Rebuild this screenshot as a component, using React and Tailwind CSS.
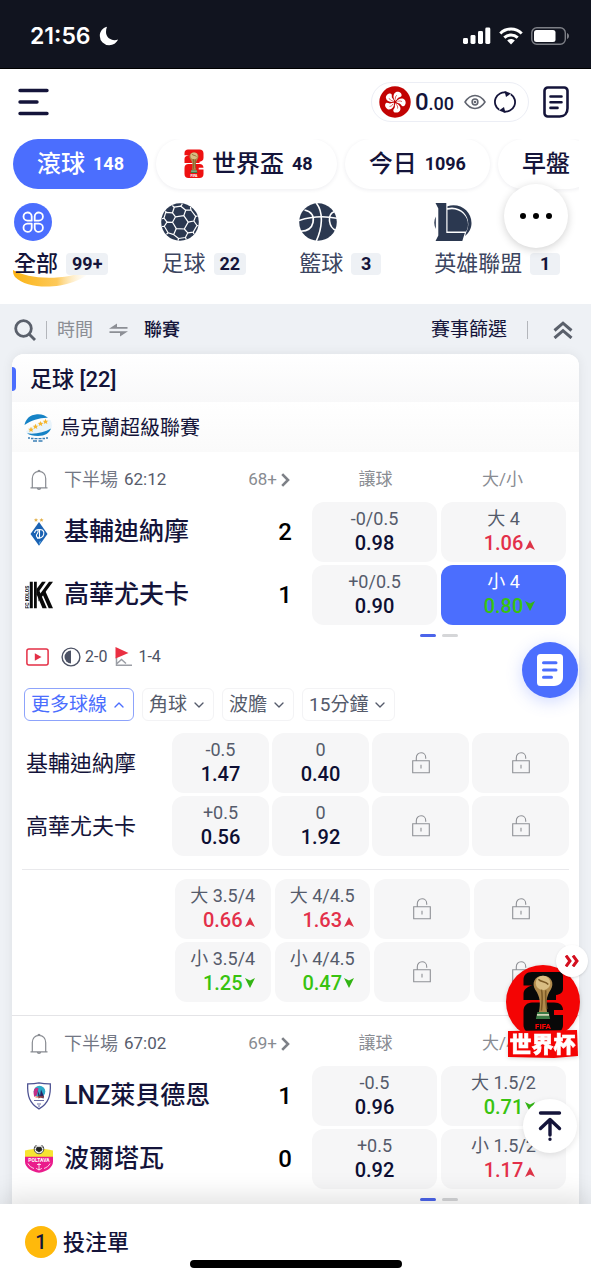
import React, { useState } from 'react';
import clsx from 'clsx';
import { ChevronDown, ChevronUp } from 'lucide-react';

const tabs = [
  { id: 'live', label: '滾球', count: 148 },
  { id: 'worldcup', label: '世界盃', count: 48, cup: true },
  { id: 'today', label: '今日', count: 1096 },
  { id: 'early', label: '早盤' },
];

const lines = ['更多球線', '角球', '波膽', '15分鐘'];

/* ---------- status bar icons ---------- */

const Moon = () => (
  <svg viewBox="0 0 20 20" className="w-5 h-5" fill="#fff">
    <path d="M8 .8C3.600 2 .8 5.500 .8 10a9.400 9.400 0 0 0 9.400 9.300c4 0 7.400-2.300 8.800-5.700-5.900 2-12-1.600-12-7.600C7 4.200 7.300 2.500 8 .8z" />
  </svg>
);

const Signal = () => (
  <svg viewBox="0 0 28 18" className="w-7 h-[18px]" fill="#fff">
    <rect x="0" y="11" width="5" height="6" rx="1.400" />
    <rect x="7.500" y="8" width="5" height="9" rx="1.400" />
    <rect x="15" y="4" width="5" height="13" rx="1.400" />
    <rect x="22.300" y="0.500" width="5" height="16.500" rx="1.400" />
  </svg>
);

const Wifi = () => (
  <svg viewBox="0 0 24 18" className="w-6 h-[18px]" fill="none" stroke="#fff" strokeWidth="3">
    <path d="M1.300 6.500C7.300.6 16.700.6 22.700 6.500" />
    <path d="M5.300 10.700c3.900-3.700 9.500-3.700 13.400 0" />
    <path d="M8.200 13.500c2.200-2 5.400-2 7.600 0L12 17.600z" fill="#fff" stroke="none" />
  </svg>
);

const Battery = () => (
  <svg viewBox="0 0 38 18" className="w-[38px] h-[18px]">
    <rect x="0.800" y="0.800" width="33.500" height="16.400" rx="5" fill="none" stroke="#7d7f86" strokeWidth="1.400" />
    <rect x="3" y="3" width="21.500" height="12" rx="2.500" fill="#fff" />
    <path d="M36 6v6c1.300-.5 2-1.700 2-3s-.7-2.500-2-3z" fill="#7d7f86" />
  </svg>
);

/* ---------- header icons ---------- */

const MenuIcon = () => (
  <svg viewBox="0 0 31 28" className="w-[31px] h-7" stroke="#14143a" strokeWidth="3.400" strokeLinecap="round">
    <path d="M2 2.500h27M2 14h17M2 25.500h27" />
  </svg>
);

const HongKong = () => (
  <svg viewBox="-16 -16 32 32" className="w-8 h-8">
    <circle r="15.700" fill="#c20303" />
    {[18, 90, 162, 234, 306].map((a) => (
      <g key={a} transform={`rotate(${a})`}>
        <path d="M0-1.200C-3.500-3-4.500-7.500-2-9.800 0-11.400 3.800-10.800 4.300-8.200 4.600-6.400 2.200-6.200 1.600-4.600 1.200-3.200 1-2.200 0-1.200z" fill="#fff" />
        <path d="M-.4-2.500C-1.300-4.200-1.200-5.500-.4-7" fill="none" stroke="#c20303" strokeWidth=".6" />
      </g>
    ))}
  </svg>
);

const Eye = () => (
  <svg viewBox="0 0 22 16" className="w-[22px] h-4" fill="none" stroke="#60646f" strokeWidth="1.500">
    <path d="M1 8C3.700 3.900 7.200 1.600 11 1.600S18.300 3.900 21 8c-2.700 4.100-6.200 6.400-10 6.400S3.700 12.100 1 8z" />
    <circle cx="11" cy="8" r="2.900" />
    <circle cx="11" cy="8" r=".6" />
  </svg>
);

const Refresh = () => (
  <svg viewBox="0 0 22 22" className="w-[22px] h-[22px]" fill="none" stroke="#14143a" strokeWidth="1.800">
    <path d="M5.200 18.800A9.500 9.500 0 0 1 12.500 1.600" />
    <path d="M16.800 3.200A9.500 9.500 0 0 1 9.500 20.400" />
    <path d="M10.500 0l6.500 2.500-5 3.500z" fill="#14143a" stroke="none" />
    <path d="M11.500 22L5 19.500 10 16z" fill="#14143a" stroke="none" />
  </svg>
);

const SlipOutline = () => (
  <svg viewBox="0 0 26 32" className="w-[26px] h-8" fill="none" stroke="#14143a" strokeWidth="2.600" strokeLinecap="round">
    <path d="M4.800 1.500h16.400a3.300 3.300 0 0 1 3.300 3.300v17.400c0 5-3 8.300-7.800 8.300H4.800a3.300 3.300 0 0 1-3.300-3.300V4.800a3.300 3.300 0 0 1 3.300-3.300z" />
    <path d="M7.500 10.500h11M7.500 16.200h11M7.500 21.900h7" />
  </svg>
);

const SlipSolid = () => (
  <svg viewBox="0 0 26 32" className="w-[26px] h-8">
    <path d="M3.500 0h19A3.500 3.500 0 0 1 26 3.500V23c0 5.500-3.500 9-9 9H3.500A3.500 3.500 0 0 1 0 28.500v-25A3.500 3.500 0 0 1 3.500 0z" fill="#fff" />
    <path d="M6.500 8.800h12.500M6.500 16h12.500M6.500 23.200h8" stroke="#4b6efe" strokeWidth="3" strokeLinecap="round" />
  </svg>
);

const Trophy = () => (
  <g>
    <path d="M-3.600 22h7.200l1 4.500h-9.200z" fill="#3b7a45" />
    <path d="M-3.900 23.800h7.800" stroke="#e8e2c8" strokeWidth="1" />
    <path d="M-2.600 22C-1.500 16-1.800 12-5 7.500-7.500 3.500-5.500-1.500 0-1.500S7.500 3.500 5 7.500C1.800 12 2 16 2.600 22z" fill="#b08a4c" />
    <circle cx="0" cy="3.200" r="4.700" fill="#d9bd83" />
    <path d="M-3 .8C-1 3 1.500 2 3.400 4.200M-1 7.500C0 12-.6 17-1 21M1.800 8c-.4 4 .2 8 .6 12" fill="none" stroke="#7c5a26" strokeWidth="1" />
  </g>
);

const CupLogo = () => (
  <svg viewBox="0 0 20 30" className="w-5 h-[30px] ml-1">
    <path d="M4 .5h11.500C18 .5 19.500 2 19.500 4.500v4.200c0 2.500-1.500 3.700-4 4v1.300H.5v-4c0-2.500 1.500-3.300 4.500-3.800H.5V4C.5 1.700 2 .5 4 .5z" fill="#ee1111" />
    <path d="M4.500 15h11c2.500 0 4 1.500 4 3.700h-4.800v1.800h4.800V25c0 2.500-1.500 4-4 4h-11c-2.500 0-4-1.500-4-4v-6c0-2.500 1.500-4 4-4z" fill="#ee1111" />
    <g transform="translate(10 4.500) scale(.74)"><Trophy /></g>
    <text x="10" y="28.300" textAnchor="middle" fontSize="3.500" fontWeight="900" fill="#fff" fontFamily="Roboto">FIFA</text>
  </svg>
);

/* ---------- sport icons ---------- */

const AllIcon = () => (
  <svg viewBox="0 0 38 38" className="w-[38px] h-[38px]">
    <circle cx="19" cy="19" r="19" fill="#4b6efe" />
    <g fill="none" stroke="#fff" strokeWidth="1.800" strokeLinejoin="round">
      <path d="M17.700 17.700h-4.200a4.100 4.100 0 1 1 4.200-4.200z" />
      <path d="M20.700 17.700h4.200a4.100 4.100 0 1 0-4.200-4.200z" />
      <path d="M17.700 20.700h-4.200a4.100 4.100 0 1 0 4.200 4.200z" />
      <path d="M20.700 20.700h4.200a4.100 4.100 0 1 1-4.200 4.200z" />
    </g>
  </svg>
);

const SoccerIcon = () => (
  <svg viewBox="0 0 38 38" className="w-[38px] h-[38px]">
    <circle cx="19" cy="19" r="18.800" fill="#2b3850" />
    <g fill="none" stroke="#fff" strokeWidth="1.200" strokeLinejoin="round">
      <path d="M14.500 13.800l8.300-1.200 4.400 6.500-3.900 6.900-8-.4-3.800-6.300z" />
      <path d="M14.500 13.800l-3-4 1.800-5.600 6.600-1 4.800 4-1.900 5.400" />
      <path d="M24.700 7.200l5.200-.2 4.800 6.300-1.900 4.700-5.600 1.100" />
      <path d="M32.800 18l3.200 4.500-3.800 6.600-5.400.7-3.500-3.800" />
      <path d="M26.800 29.800l-2.400 4.700-6.800 1-4.900-3.900 2.600-6" />
      <path d="M12.700 31.600l-5.600-1.800-3.800-6.500 2.700-4.200 5.500.2" />
      <path d="M6 19.100l-3-4 1.700-5.800 6.800.5" />
      <path d="M13.300 4.200l-2-1.700M19.900 3.200l1.500-2.400M29.900 7l-.4-3M34.700 13.300l2-.3M36 22.500l1.500.4M32.200 29.100l.8 1.800M24.400 34.500l1 2M17.600 35.500l-.6 2M7.100 29.800l-1.600 1.500M3.300 23.300l-2.400.2M3 15.100l-2 .6M4.700 9.300l.2-1.400" />
    </g>
  </svg>
);

const BasketIcon = () => (
  <svg viewBox="0 0 38 38" className="w-[38px] h-[38px]">
    <circle cx="19" cy="19" r="18.800" fill="#2b3850" />
    <g fill="none" stroke="#fff" strokeWidth="1.600">
      <path d="M17.300 0C21.500 5.500 22.700 11 22.300 18.500 22 26 20 32 17.300 38" />
      <path d="M0 17.500C12 13.500 25 12.700 38 15.300" />
      <path d="M5.500 7C12 8.500 15.300 13 14 19.500 12.800 25 9 28 2 28.300" />
      <path d="M35.500 8.500c-4 1.300-5.500 5-5 9.500.6 4.500 3 8 6.500 9.300" />
    </g>
  </svg>
);

const LolIcon = () => (
  <svg viewBox="0 0 38 38" className="w-[38px] h-[38px]" fill="#2b3850">
    <path d="M1.800 13.500C-.2 17.500-.2 22 1.800 26z" />
    <path d="M13.500 3.200C26-.5 37.500 8 37.500 20c0 5.500-2.700 10-6.500 13l1.300-4C38 18 31 5 18 4.600c-1.500 0-3 .2-4.500.5z" />
    <path d="M13.500 6.700C24 4 34 11.500 34 21.500c0 2.800-.7 5-2 7H13.500z" />
    <path d="M1.500 0h10.800v30h18.500L28.300 38H1.500l2.800-5.500v-27z" />
  </svg>
);

const sports = [
  { name: '全部', count: '99+', Icon: AllIcon, active: true },
  { name: '足球', count: '22', Icon: SoccerIcon },
  { name: '籃球', count: '3', Icon: BasketIcon },
  { name: '英雄聯盟', count: '1', Icon: LolIcon },
];

/* ---------- list icons ---------- */

const SearchIcon = () => (
  <svg viewBox="0 0 22 22" className="w-[22px] h-[22px]" fill="none" stroke="#5a606b" strokeWidth="2.800">
    <circle cx="9.500" cy="9.500" r="7.800" />
    <path d="M15 15l6 6" />
  </svg>
);

const SwapIcon = () => (
  <svg viewBox="0 0 19 14" className="w-[19px] h-3.5" fill="#8c8f95">
    <path d="M8 .5V4h10.500v1.800H0zM11 13.500V10H.5V8.200H19z" />
  </svg>
);

const DoubleUp = () => (
  <svg viewBox="0 0 20 18" className="w-5 h-[18px]" fill="none" stroke="#5a606b" strokeWidth="3">
    <path d="M1.500 9.500L10 2.200l8.500 7.300M1.500 17L10 9.700l8.500 7.300" />
  </svg>
);

const MoreArrow = () => (
  <svg viewBox="0 0 9 14" className="w-[9px] h-3.5 ml-1" fill="none" stroke="#7d8087" strokeWidth="2.600">
    <path d="M1.200 1.200L7 7l-5.800 5.800" />
  </svg>
);

const Bell = () => (
  <svg viewBox="0 0 18 22" className="w-[18px] h-[22px]" fill="none" stroke="#888b91" strokeWidth="1.200">
    <path d="M.5 18.800h17M2.300 18.800V9.500C2.300 5.400 5 2.300 9 2.300s6.700 3.100 6.700 7.200v9.300M8 2.300a1 1 0 1 1 2 0M7.300 19.200c.3 1.500 3.100 1.500 3.400 0" />
  </svg>
);

const Unlock = () => (
  <svg viewBox="0 0 18 22" className="w-[18px] h-[22px]" fill="none" stroke="#8f9196" strokeWidth="1.100">
    <path d="M.7 8.700h16.600v12H.7zM4.300 8.700V6C4.300 2.800 6.400.8 9.100.8c2.600 0 4.600 1.900 4.600 4.700v1.200M9 12.700v3.800" />
  </svg>
);

const UclLogo = () => (
  <svg viewBox="0 0 28 28" className="w-7 h-7">
    <path d="M.5 11C1.500 5 6 .8 13 .2c5-.3 8.500 1.300 11 3.600C16 3.500 7 6.500.5 11z" fill="#1683c6" />
    <path d="M2 17.500C9 11 18 6.500 26.500 6c1.500 3 1.800 6 .8 9C19 20 10 21.500 3 19.500z" fill="#e9f4fb" />
    <path d="M3 19.300C11 20.500 20 18.500 27 14.500 25.500 19 21 22 14 22c-5 0-8.500-.8-11-2.700z" fill="#1683c6" />
    {[[7, 15.500], [11.500, 12.500], [16.500, 9.600], [21.500, 7.500]].map(([x, y]) => (
      <path key={x} transform={`translate(${x} ${y})`} d="M0-2.700L.8-.8l2 .1L1.300.6l.5 2L0 1.500l-1.700 1 .4-2L-2.800-.7l2-.1z" fill="#f6b62d" />
    ))}
    <path d="M4 24h2M7 24.500h2.500M10.500 24.700h3M14.500 24.700h3M18.500 24.500h2.500M22 24h2M9 27h4M14.500 27h4" stroke="#3a7fb5" strokeWidth="1.300" />
  </svg>
);

const DynamoCrest = () => (
  <svg viewBox="0 0 28 28" className="w-7 h-7">
    <path d="M11 0l.6 1.300 1.400.1-1 1 .3 1.400-1.300-.7-1.300.7.300-1.400-1-1 1.400-.1zM16.500 0l.6 1.300 1.400.1-1 1 .3 1.400-1.300-.7-1.300.7.300-1.400-1-1 1.400-.1z" fill="#e2b04a" />
    <path d="M14 4l8.500 12L14 27.800 5.500 16z" fill="#1a62b3" />
    <path d="M14 24l2.500-1.500L14 27z" fill="#57a4e0" />
    <path d="M14.500 11.500v8M11.500 11.800c6-1.300 8 1 7.200 4.500-.7 3-3 4-6.700 4M9.500 15c.5-3 2.500-3.600 3.500-2.500 1 1.500-1 3-1.500 4.500-.4 1.500.5 2.500 2 2.500" fill="none" stroke="#fff" strokeWidth="1.100" />
  </svg>
);

const KolosCrest = () => (
  <svg viewBox="0 0 28 28" className="w-7 h-7">
    <text transform="translate(3.800 27.500) rotate(-90)" fontSize="5" fontWeight="700" fontFamily="Roboto" fill="#111">FC KOLOS</text>
    <g fill="#0a0a0a">
      <path d="M4.800.8h3v26.500h-3zM9 .8h2.800v26.500H9z" />
      <path d="M17 .8h3.800L11.500 14V8zM24 .8h4L13.500 20.500v-5.500z" />
      <path d="M11.500 13l2.800-3.500 7.500 17.800h-4.300zM17 12l2.600-3.600L28 27.300h-4.300z" />
    </g>
  </svg>
);

const LnzCrest = () => (
  <svg viewBox="0 0 28 28" className="w-7 h-7">
    <path d="M14 .8c4 .9 7.500 1.200 11.300 1.100.6 11.600-1.800 19.600-11.300 25C4.500 21.500 2.100 13.500 2.700 1.900 6.500 2 10 1.700 14 .8z" fill="#fff" stroke="#4d5292" strokeWidth="1.300" />
    <circle cx="14.500" cy="9.500" r="5.800" fill="#2ca9c9" />
    <path d="M9 8c1-2.500 3.500-3 4.500-1.500L12 13l-2.500 2C8.500 13 8.300 10 9 8z" fill="#c12f86" />
    <path d="M12.500 8l2.500 6 1-6.500 3 7-.5 2-3-1-2 1z" fill="#2c2463" />
    <path d="M10.500 15h8" stroke="#e05a2b" strokeWidth="1" />
    <path d="M9 18.500h10M12 22h4M13 24h2" stroke="#6b6fa5" strokeWidth="1" />
  </svg>
);

const PoltavaCrest = () => (
  <svg viewBox="0 0 30 28" className="w-[30px] h-7">
    <path d="M1 5.500C10 3 20 3 29 5.500V14H1z" fill="#f7e531" />
    <path d="M1 11.800h28v4.700c0 6-6 10-14 11.300C7 26.500 1 22.500 1 16.500z" fill="#ea1c8c" />
    <circle cx="15" cy="4" r="4.800" fill="#f4f4f4" stroke="#333" strokeWidth=".8" />
    <path d="M13 2.300h4l1 2.700-3 2-3-2zM10.500 3l1.500-1.500M19.500 3L18 1.500" fill="#222" stroke="#222" strokeWidth=".8" />
    <text x="15" y="16.500" textAnchor="middle" fontSize="5" fontWeight="700" fontFamily="Roboto" fill="#fff">POLTAVA</text>
    <path d="M15 18v7.500M12 23c1.500 2 4.500 2 6 0M13 19.500h4M4 18.500c1 2.500 3.500 4 6 5M26 18.500c-1 2.500-3.500 4-6 5" stroke="#fff" strokeWidth=".8" fill="none" />
  </svg>
);

const PlayIcon = () => (
  <svg viewBox="0 0 23 18" className="w-[23px] h-[18px]">
    <rect x="0.900" y="0.900" width="21.200" height="16.200" rx="2" fill="none" stroke="#e42f46" strokeWidth="1.500" />
    <path d="M8.800 5.300L15.500 9l-6.700 3.700z" fill="#e42f46" />
  </svg>
);

const HalfIcon = () => (
  <svg viewBox="0 0 20 20" className="w-5 h-5">
    <circle cx="10" cy="10" r="8.900" fill="none" stroke="#4c5265" strokeWidth="1.400" />
    <path d="M10 3.500v13a6.500 6.500 0 0 1 0-13z" fill="#4c5265" />
  </svg>
);

const CornerIcon = () => (
  <svg viewBox="0 0 17 20" className="w-[17px] h-5">
    <path d="M1.500 10v8.300H17M1.500 17l5-4.500 4.500 4" fill="none" stroke="#9b9ea5" strokeWidth="1.500" />
    <path d="M.5 0l13 6-13 5.500z" fill="#ea2f42" />
  </svg>
);

/* ---------- odds ---------- */

const Arrow = ({ up }) => (
  <svg viewBox="0 0 10 10" className={clsx('w-2.5 h-2.5 ml-0.5', up ? 'mt-1 text-[#dd3347]' : 'text-[#32b414]')} fill="currentColor">
    {up ? <path d="M5 0l5 10-5-2.500L0 10z" /> : <path d="M5 10L0 0l5 2.500L10 0z" />}
  </svg>
);

const Odds = ({ line, odd, trend, locked, picked }) => (
  <button
    disabled={locked}
    className={clsx(
      'h-[60px] min-w-0 rounded-xl flex flex-col items-center',
      picked ? 'bg-[#4b6efe]' : 'bg-[#f6f6f7]',
      locked ? 'justify-center' : 'pt-[5px]'
    )}
  >
    {locked ? <Unlock /> : (
      <>
        <span className={clsx('text-lg leading-6 whitespace-nowrap', picked ? 'text-white' : 'text-[#555b6b]')}>{line}</span>
        <span
          className={clsx(
            'w-full grid grid-cols-[1fr_auto_1fr] items-center text-xl leading-6 font-medium',
            trend === 'up' && 'text-[#e3304a]',
            trend === 'down' && 'text-[#38c310]',
            !trend && 'text-[#0d0f33]'
          )}
        >
          <i />
          {odd}
          {trend && <Arrow up={trend === 'up'} />}
        </span>
      </>
    )}
  </button>
);

const Pager = () => (
  <div className="h-5 flex items-center justify-center gap-1.5">
    <span className="w-4 h-[3px] rounded-full bg-[#4b64ea]" />
    <span className="w-4 h-[3px] rounded-full bg-[#d5d6d8]" />
  </div>
);

const Match = ({ match }) => (
  <section className="flex gap-5 pl-3 pr-[13px]">
    <div className="flex-1 min-w-0">
      <div className="h-[50px] pt-1.5 flex items-center text-[17px]">
        <button aria-label="提醒" className="w-[30px] flex justify-center"><Bell /></button>
        <span className="ml-2.5 text-lg text-[#737784]">下半場</span>
        <span className="ml-1.5 text-[#565b6b]">{match.time}</span>
        <button className="ml-auto mr-0.5 flex items-center text-[#888b91]">
          {match.more}
          <MoreArrow />
        </button>
      </div>
      <div className="flex flex-col gap-[3px]">
        {match.teams.map(({ name, score, Crest }) => (
          <div key={name} className="h-[60px] flex items-center text-[25px] leading-8 font-medium">
            <div className="w-[30px] flex justify-center"><Crest /></div>
            <span className="ml-2.5 text-[#14143a]">{name}</span>
            <span className="ml-auto text-2xl text-black">{score}</span>
          </div>
        ))}
      </div>
    </div>
    <div className="w-[254px] shrink-0">
      <div className="h-[50px] pt-1.5 grid grid-cols-2 items-center text-center text-[17px] text-[#898c92]">
        <span>讓球</span>
        <span>大/小</span>
      </div>
      <div className="grid grid-cols-2 gap-x-1 gap-y-[3px]">
        {match.odds.map((o, i) => <Odds key={i} {...o} />)}
      </div>
      <Pager />
    </div>
  </section>
);

const matches = [
  {
    time: '62:12',
    more: '68+',
    teams: [
      { name: '基輔迪納摩', score: 2, Crest: DynamoCrest },
      { name: '高華尤夫卡', score: 1, Crest: KolosCrest },
    ],
    odds: [
      { line: '-0/0.5', odd: '0.98' },
      { line: '大 4', odd: '1.06', trend: 'up' },
      { line: '+0/0.5', odd: '0.90' },
      { line: '小 4', odd: '0.80', trend: 'down', picked: true },
    ],
  },
  {
    time: '67:02',
    more: '69+',
    teams: [
      { name: 'LNZ萊貝德恩', score: 1, Crest: LnzCrest },
      { name: '波爾塔瓦', score: 0, Crest: PoltavaCrest },
    ],
    odds: [
      { line: '-0.5', odd: '0.96' },
      { line: '大 1.5/2', odd: '0.71', trend: 'down' },
      { line: '+0.5', odd: '0.92' },
      { line: '小 1.5/2', odd: '1.17', trend: 'up' },
    ],
  },
];

const handicapRows = [
  { name: '基輔迪納摩', cells: [{ line: '-0.5', odd: '1.47' }, { line: '0', odd: '0.40' }, { locked: true }, { locked: true }] },
  { name: '高華尤夫卡', cells: [{ line: '+0.5', odd: '0.56' }, { line: '0', odd: '1.92' }, { locked: true }, { locked: true }] },
];

const totalCells = [
  { line: '大 3.5/4', odd: '0.66', trend: 'up' },
  { line: '大 4/4.5', odd: '1.63', trend: 'up' },
  { locked: true },
  { locked: true },
  { line: '小 3.5/4', odd: '1.25', trend: 'down' },
  { line: '小 4/4.5', odd: '0.47', trend: 'down' },
  { locked: true },
  { locked: true },
];

const WorldCupFloat = () => (
  <div className="absolute right-0 bottom-[218px] w-[86px] h-[120px]">
    <svg viewBox="0 0 86 120" className="w-full h-full drop-shadow-sm">
      <circle cx="38" cy="60" r="37" fill="#f40404" />
      <path d="M27 30h27c3 0 4 2 4 4.500v12c0 4-2.500 6-7 6.500v5H18.500v-6c0-4.500 3-7 9-8.500h-9V38c0-5 3-8 8.500-8z" fill="#080808" />
      <path d="M27 60.500h22c6 0 9 3 9 7.500h-9v5h9v10c0 5-3.500 8-9 8H27c-5 0-8.500-3-8.500-8V69c0-5 3.500-8.500 8.500-8.500z" fill="#080808" />
      <g transform="translate(38 36) scale(1.550)"><Trophy /></g>
      <text x="38" y="87" textAnchor="middle" fontSize="8" fontWeight="900" fontFamily="Roboto" fill="#f40404">FIFA</text>
      <path d="M3 89l69-1 1 26-24 2-46-1z" fill="#f40404" />
      <text x="37.500" y="110" textAnchor="middle" fontSize="22" fontWeight="900" fontFamily="Noto Sans CJK SC" fill="#fff" stroke="#fff" strokeWidth=".6">世界杯</text>
    </svg>
    <button aria-label="收起" className="absolute right-[3px] top-[3px] w-8 h-8 rounded-full bg-white shadow flex items-center justify-center">
      <svg viewBox="0 0 14 12" className="w-3.5 h-3" fill="none" stroke="#d40f1f" strokeWidth="3">
        <path d="M1 .5L5 6l-4 5.500M8 .5L12 6l-4 5.500" />
      </svg>
    </button>
  </div>
);

export default function App() {
  const [tab, setTab] = useState('live');
  const [openLine, setOpenLine] = useState('更多球線');

  return (
    <div className="relative h-screen flex flex-col overflow-hidden bg-[#eef1f5] font-[family-name:Roboto,'Noto_Sans_CJK_TC',sans-serif]">
      {/* Status bar */}
      <div className="h-[69px] shrink-0 bg-[#11141f] border-b border-black flex items-center pt-1 pl-[30px] pr-[22px] text-white">
        <span className="font-[family-name:Inter,sans-serif] text-[23px] font-semibold">21:56</span>
        <span className="ml-2"><Moon /></span>
        <div className="ml-auto flex items-center gap-2">
          <Signal />
          <Wifi />
          <Battery />
        </div>
      </div>

      <main className="flex-1 min-h-0 overflow-hidden">
        <header className="bg-white pb-3">
          <div className="h-[66px] flex items-center pl-[18px] pr-[22px]">
            <button aria-label="選單"><MenuIcon /></button>
            <div className="ml-auto h-10 pl-[7px] pr-3 flex items-center rounded-full border border-[#eceef5] text-[#14143a]">
              <HongKong />
              <span className="ml-1 text-2xl font-medium">0<span className="text-lg">.00</span></span>
              <button aria-label="顯示餘額" className="ml-2.5"><Eye /></button>
              <button aria-label="重新整理" className="ml-2"><Refresh /></button>
            </div>
            <button aria-label="注單" className="ml-3.5"><SlipOutline /></button>
          </div>

          <nav className="mt-1 ml-[13px] mr-3 h-[54px] -mb-1 flex gap-2 overflow-hidden">
            {tabs.map((t) => (
              <button
                key={t.id}
                onClick={() => setTab(t.id)}
                className={clsx(
                  'h-[50px] shrink-0 px-6 flex items-center gap-2 rounded-full text-2xl font-medium whitespace-nowrap',
                  tab === t.id ? 'bg-[#4b6efe] text-white' : 'bg-white text-[#14143a] shadow-[0_1px_4px_rgba(20,20,58,0.08)]'
                )}
              >
                {t.cup && <CupLogo />}
                {t.label}
                {t.count && <span className="text-lg font-bold">{t.count}</span>}
              </button>
            ))}
          </nav>

          <div className="relative mt-3.5 pl-3">
            <div className="flex gap-[53px] overflow-hidden pl-0.5 pb-4">
              {sports.map(({ name, count, Icon, active }) => (
                <button key={name} className="relative shrink-0 flex flex-col items-start">
                  <Icon />
                  {active && (
                    <svg viewBox="0 0 80 20" className="absolute -left-px top-16 w-20 h-5">
                      <defs>
                        <linearGradient id="swoosh">
                          <stop offset="0" stopColor="#fbb414" />
                          <stop offset=".55" stopColor="#fdc95a" />
                          <stop offset="1" stopColor="#fff" stopOpacity="0" />
                        </linearGradient>
                      </defs>
                      <path d="M0 3C16 12 48 15 80 2 66 21 18 26 2 10 0 7 0 5 0 3z" fill="url(#swoosh)" />
                    </svg>
                  )}
                  <span className="relative mt-[11px] h-6 flex items-center gap-2 text-[22px] leading-6">
                    <span className={active ? 'font-medium text-[#14143a]' : 'text-[#3c4560]'}>{name}</span>
                    <span className="h-[22px] min-w-[30px] px-1.5 rounded bg-[#eef1f5] text-lg leading-[22px] font-bold text-[#14143a]">{count}</span>
                  </span>
                </button>
              ))}
            </div>
            <button aria-label="更多" className="absolute right-[23px] -top-[19px] w-16 h-16 rounded-full bg-white shadow-[0_2px_8px_rgba(0,0,0,0.18)] flex items-center justify-center gap-[7px]">
              <i className="w-1.5 h-1.5 rounded-full bg-black" />
              <i className="w-1.5 h-1.5 rounded-full bg-black" />
              <i className="w-1.5 h-1.5 rounded-full bg-black" />
            </button>
          </div>
        </header>

        {/* Filter */}
        <div className="h-[50px] pt-0.5 flex items-center pl-3.5 pr-[18px] text-lg text-[#14143a]">
          <button aria-label="搜尋"><SearchIcon /></button>
          <i className="ml-2.5 w-px h-[18px] bg-[#b3b6bb]" />
          <button className="ml-2.5 text-[#8b8e94]">時間</button>
          <span className="mx-4"><SwapIcon /></span>
          <button className="font-medium">聯賽</button>
          <button className="ml-auto text-[19px]">賽事篩選</button>
          <i className="ml-5 w-px h-[18px] bg-[#b3b6bb]" />
          <button aria-label="全部收起" className="ml-[25px]"><DoubleUp /></button>
        </div>

        <div className="mx-3 bg-white rounded-t-xl shadow-[0_0_12px_rgba(0,0,0,0.07)]">
          <div className="h-12 pt-0.5 flex items-center rounded-t-xl bg-linear-to-b from-white to-[#f8f8f9]">
            <i className="w-1 h-6 rounded-r-full bg-[#4b6efe]" />
            <h2 className="ml-3.5 text-[22px] font-medium text-[#14143a]">足球 [22]</h2>
          </div>
          <div className="h-[50px] pt-0.5 px-3 flex items-center gap-2 bg-linear-to-b from-white to-[#fafafa]">
            <UclLogo />
            <h3 className="text-xl text-[#14143a]">烏克蘭超級聯賽</h3>
          </div>

          <Match match={matches[0]} />

          <div className="px-3 h-6 flex items-center text-base text-[#4c5265]">
            <span className="ml-0.5"><PlayIcon /></span>
            <span className="ml-3"><HalfIcon /></span>
            <span className="ml-1">2-0</span>
            <span className="ml-2"><CornerIcon /></span>
            <span className="ml-1.5">1-4</span>
          </div>

          <div className="px-3 mt-[19px] flex gap-2">
            {lines.map((l) => (
              <button
                key={l}
                onClick={() => setOpenLine(l)}
                className={clsx(
                  'h-[33px] px-1.5 flex items-center gap-1 rounded-md border text-[19px] leading-6',
                  openLine === l ? 'border-[#8da3fb] text-[#4b6efe]' : 'border-[#f3f3f5] text-[#555b6b]'
                )}
              >
                {l}
                {openLine === l ? <ChevronUp className="w-4 h-4" /> : <ChevronDown className="w-4 h-4" />}
              </button>
            ))}
          </div>

          <div className="mt-3 pl-3.5 pr-2.5 flex flex-col gap-[3px]">
            {handicapRows.map((row) => (
              <div key={row.name} className="flex items-center">
                <span className="flex-1 text-[22px] text-[#14143a]">{row.name}</span>
                <div className="w-[397px] grid grid-cols-4 gap-[3px]">
                  {row.cells.map((c, i) => <Odds key={i} {...c} />)}
                </div>
              </div>
            ))}
          </div>

          <hr className="mx-2.5 mt-[13px] border-[#e9e9ec]" />

          <div className="mt-[9px] mb-[13px] pr-2.5 flex justify-end">
            <div className="w-[394px] grid grid-cols-4 gap-x-1 gap-y-[3px]">
              {totalCells.map((c, i) => <Odds key={i} {...c} />)}
            </div>
          </div>

          <hr className="border-[#e4e4e7]" />

          <Match match={matches[1]} />
        </div>
      </main>

      {/* Bet slip bar */}
      <footer className="relative h-[76px] shrink-0 bg-white pl-[25px] shadow-[0_-6px_28px_rgba(0,0,0,0.13)]">
        <button className="h-[76px] flex items-center gap-1.5 text-[22px] font-medium text-[#14143a]">
          <span className="w-8 h-8 rounded-full bg-[#ffb90b] text-xl leading-8 text-center">1</span>
          投注單
        </button>
        <i className="absolute bottom-3 left-1/2 -translate-x-1/2 w-[212px] h-2 rounded-full bg-black" />
      </footer>

      {/* Floating buttons */}
      <button aria-label="注單" className="absolute right-[13px] bottom-[582px] w-14 h-14 rounded-full bg-[#4b6efe] shadow-[0_4px_16px_rgba(75,110,254,0.25)] flex items-center justify-center">
        <SlipSolid />
      </button>
      <WorldCupFloat />
      <button aria-label="回到頂部" className="absolute right-3.5 bottom-[127px] w-[54px] h-[54px] rounded-full bg-white shadow-[0_2px_6px_rgba(0,0,0,0.1)] flex items-center justify-center">
        <svg viewBox="0 0 24 30" className="w-6 h-[30px]" fill="none" stroke="#14143a" strokeWidth="3.400" strokeLinecap="round" strokeLinejoin="round">
          <path d="M2.500 2h19M12 24V9M2.500 17.500L12 8.500l9.500 9M12 28.200v.1" />
        </svg>
      </button>
    </div>
  );
}
